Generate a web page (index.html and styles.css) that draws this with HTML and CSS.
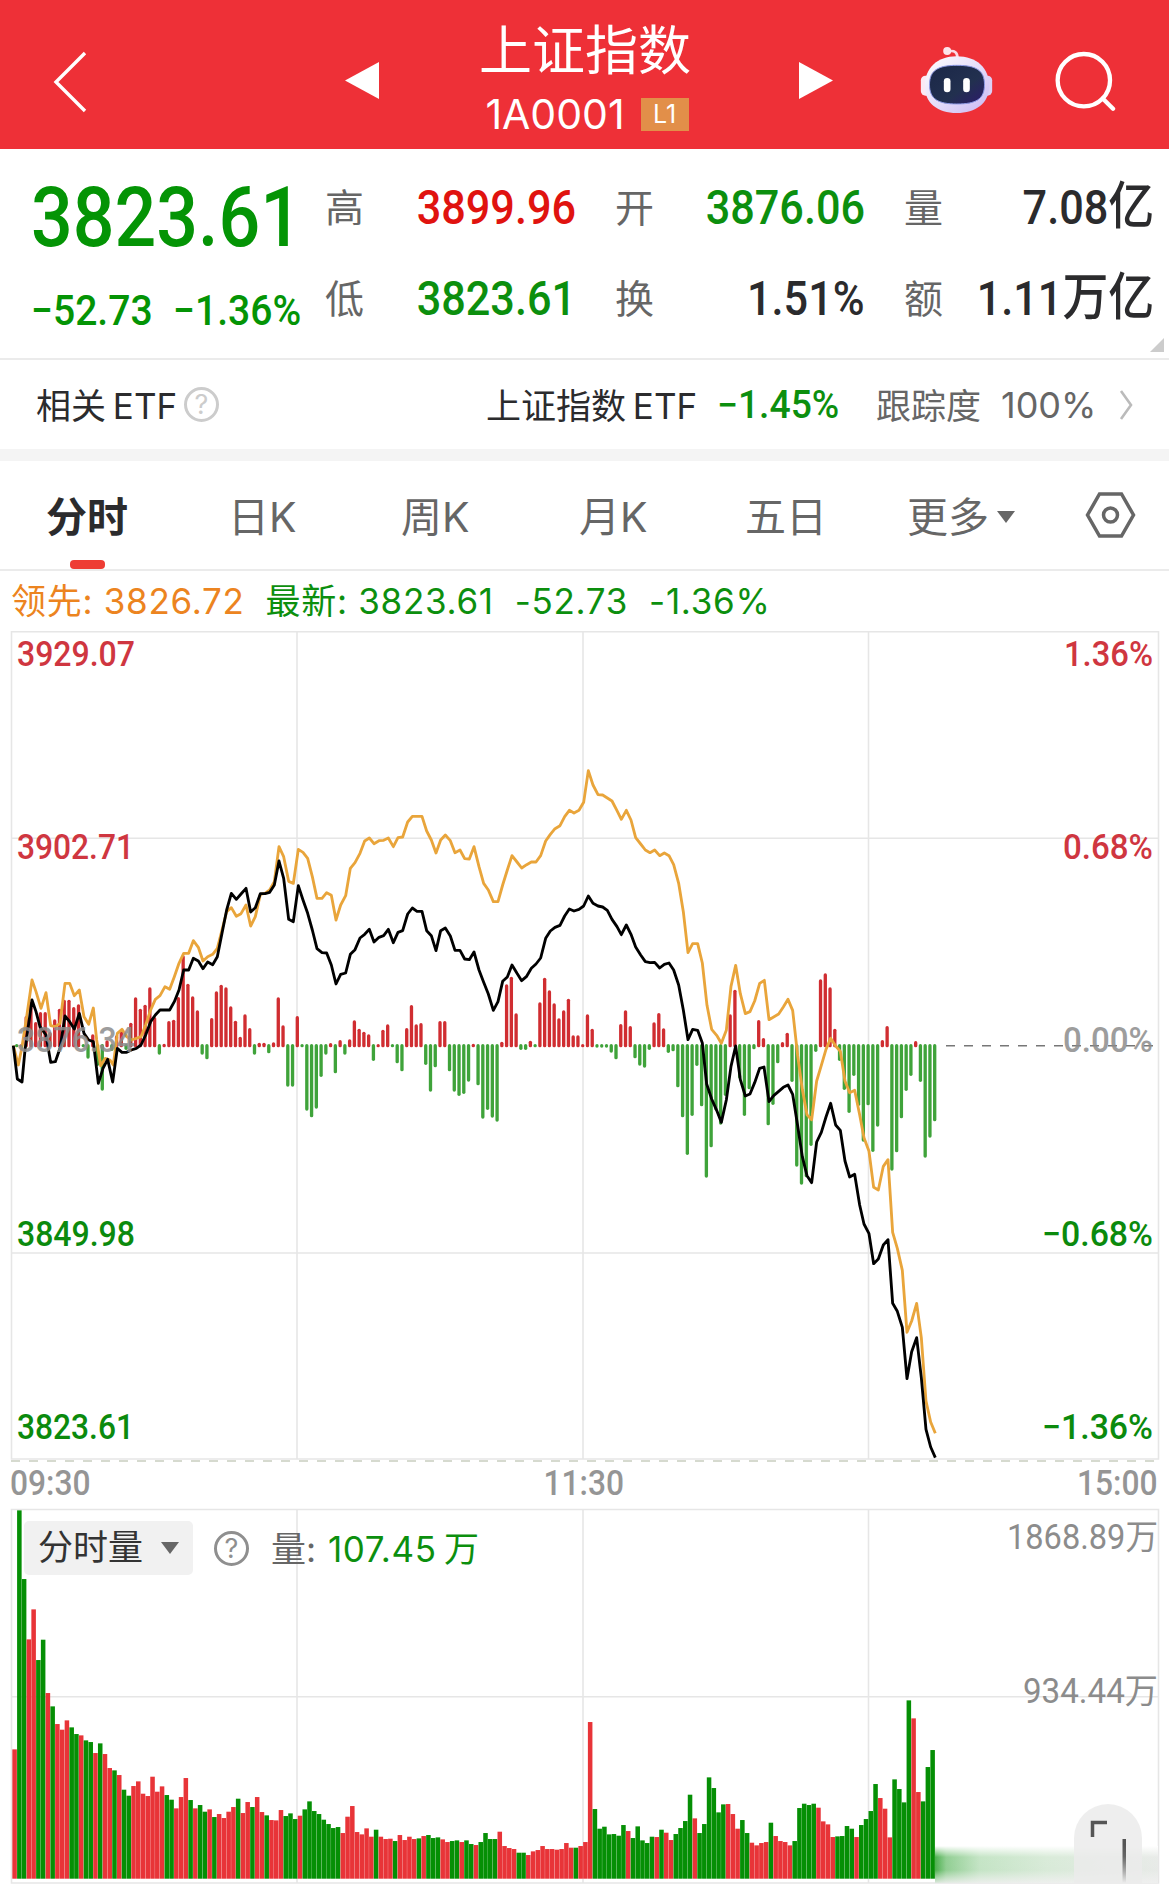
FILE: index.html
```html
<!DOCTYPE html>
<html lang="zh-CN">
<head>
  <meta charset="UTF-8" />
  <meta name="viewport" content="width=device-width, initial-scale=1.0"/>
  <title>上证指数 1A0001</title>
  <link rel="stylesheet" href="styles.css">
</head>
<body>

  <header>
    <svg class="back" viewBox="0 0 34 62"><path d="M32 2 3 31 32 60"/></svg>
    <svg class="arrow prev" viewBox="0 0 35 38"><path d="M35 0V38L0 19Z"/></svg>
    <div class="title">
      <h1>上证指数</h1>
      <div class="code"><span>1A0001</span><b>L1</b></div>
    </div>
    <svg class="arrow next" viewBox="0 0 35 38"><path d="M0 0V38L35 19Z"/></svg>
    <svg class="robot" viewBox="55 75 230 210">
      <defs>
        <linearGradient id="shell" x1="0" y1="0" x2="1" y2="1">
          <stop offset="0" stop-color="#fff"/>
          <stop offset=".5" stop-color="#e6defa"/>
          <stop offset="1" stop-color="#c9b8f2"/>
        </linearGradient>
        <linearGradient id="face" x1="0" y1="0" x2="1" y2="1">
          <stop offset="0" stop-color="#1b2748"/>
          <stop offset=".6" stop-color="#22304f"/>
          <stop offset="1" stop-color="#2d1a6c"/>
        </linearGradient>
      </defs>
      <path d="M146 94Q174 88 173 116" fill="none" stroke="#fbd9e4" stroke-width="8"/>
      <circle cx="142" cy="93" r="12" fill="#fde4ea"/>
      <rect x="63" y="167" width="34" height="60" rx="14" fill="#fbe9f4"/>
      <rect x="244" y="167" width="33" height="60" rx="14" fill="#dccff5"/>
      <path d="M170 109C232 109 268 145 268 198C268 250 228 279 170 279C114 279 75 250 75 198C75 145 112 109 170 109Z" fill="url(#shell)"/>
      <path d="M171 136C228 136 254 150 254 194C254 238 228 252 171 252C116 252 89 238 89 194C89 150 116 136 171 136Z" fill="url(#face)" stroke="#8f9be6" stroke-width="3"/>
      <rect x="132" y="174" width="20" height="43" rx="10" fill="#fff"/>
      <rect x="190" y="174" width="20" height="43" rx="10" fill="#fff"/>
    </svg>
    <svg class="search" viewBox="460 90 190 190">
      <circle cx="553" cy="181" r="79"/><path d="M610 236 641 267"/>
    </svg>
  </header>

  <section class="quote">
    <div class="price">
      <div class="last">3823.61</div>
      <div class="change"><span>−52.73</span><span>−1.36%</span></div>
    </div>
    <dl class="stats">
      <div><dt>高</dt><dd class="up">3899.96</dd></div>
      <div><dt>开</dt><dd class="down">3876.06</dd></div>
      <div><dt>量</dt><dd>7.08<i>亿</i></dd></div>
      <div><dt>低</dt><dd class="down">3823.61</dd></div>
      <div><dt>换</dt><dd>1.51%</dd></div>
      <div><dt>额</dt><dd>1.11<i>万亿</i></dd></div>
    </dl>
    <span class="corner"></span>
  </section>

  <section class="etf">
    <span class="etf-label">相关 ETF</span>
    <span class="help light">?</span>
    <span class="etf-name">上证指数 ETF</span>
    <span class="etf-change">−1.45%</span>
    <span class="etf-track">跟踪度</span>
    <span class="etf-pct">100%</span>
    <svg class="chevron" viewBox="0 0 14 30"><path d="M2 1 12 15 2 29"/></svg>
  </section>

  <nav class="tabs">
    <a class="active">分时</a>
    <a>日K</a>
    <a>周K</a>
    <a>月K</a>
    <a>五日</a>
    <a class="more">更多<i class="caret"></i></a>
    <svg class="gear" viewBox="0 0 50 46"><path d="M14 2H36L48 23 36 44H14L2 23Z"/><circle cx="25" cy="23" r="7"/></svg>
  </nav>

  <div class="legend">
    <span class="lead">领先: 3826.72</span>
    <span>最新: 3823.61</span>
    <span>-52.73</span>
    <span>-1.36%</span>
  </div>

  <svg class="chart" id="priceChart" viewBox="0 0 1169 836">
    <g class="grid">
      <path d="M11.5 3.7H1158.5V831H11.5ZM297 4V831M583 4V831M868.5 4V831M12 210.3H1158M12 625H1158"/>
    </g>
    <path class="dash-bottom" d="M11 833H1158"/>
    <path class="dash-zero" d="M946 417.8H1158"/>
    <!-- 1 px = 3 unidades de datos; eje cero en 917 -->
    <g transform="translate(0 112) scale(.33333)">
      <g id="macd"></g>
      <polyline class="line avg" points="40,917 55,975 66,920 80,830 96,720 108,755 123,805 138,758 152,857 166,860 180,850 195,730 209,730 223,767 238,750 252,830 266,853 280,804 290,900 302,977 316,955 330,960 340,975 352,880 366,868 380,890 394,900 409,895 423,890 437,855 452,810 466,778 480,767 495,740 509,748 523,710 537,670 551,640 566,640 580,602 595,622 609,663 623,650 638,643 652,625 666,570 680,515 694,503 709,529 723,521 738,495 752,558 766,530 781,463 795,460 809,450 823,425 837,320 851,350 866,424 880,430 895,328 909,337 923,355 937,410 951,475 966,475 980,458 994,466 1008,540 1022,495 1037,467 1051,385 1065,368 1080,340 1094,303 1108,294 1122,311 1137,302 1151,301 1165,294 1180,320 1194,293 1208,291 1223,246 1237,229 1251,229 1266,229 1280,273 1294,300 1308,339 1322,300 1336,285 1351,302 1365,338 1380,330 1394,356 1408,357 1422,320 1437,380 1451,430 1465,450 1480,485 1494,485 1508,435 1522,390 1536,347 1551,366 1565,384 1580,374 1594,366 1608,366 1622,347 1637,303 1651,283 1665,266 1680,257 1694,230 1708,211 1722,219 1737,211 1751,187 1765,92 1779,135 1794,164 1808,165 1822,174 1836,183 1851,212 1864,238 1879,211 1893,240 1907,293 1922,312 1936,330 1950,338 1964,330 1979,347 1993,339 2007,347 2021,374 2036,430 2050,515 2064,638 2078,611 2093,611 2107,669 2121,796 2135,868 2150,886 2164,910 2179,871 2193,739 2207,676 2221,761 2236,821 2250,815 2264,783 2279,730 2293,721 2307,839 2321,831 2336,822 2350,801 2364,778 2378,811 2393,947 2407,1048 2421,1124 2435,1139 2450,1023 2464,976 2478,928 2492,895 2507,918 2521,934 2535,1023 2549,1058 2564,1051 2579,1124 2592,1193 2607,1234 2621,1342 2635,1350 2650,1279 2664,1259 2678,1477 2692,1525 2707,1591 2721,1777 2735,1743 2750,1690 2764,1793 2778,1983 2792,2046 2806,2080"/>
      <polyline class="line index" points="40,917 52,1017 66,1026 75,930 96,780 108,815 120,860 138,885 152,967 166,965 180,925 195,828 209,845 223,867 238,820 252,880 266,900 280,905 295,1030 309,985 323,958 338,1026 352,925 366,937 380,937 394,930 409,925 423,915 437,885 452,845 466,825 480,810 495,810 509,810 523,785 537,750 551,690 566,690 580,655 595,663 609,686 623,666 638,674 652,650 666,580 680,510 694,460 709,478 723,462 738,445 752,516 766,503 781,461 795,461 809,457 823,435 837,363 851,415 866,538 880,545 895,437 909,480 923,520 937,570 951,626 966,638 980,639 994,675 1008,732 1022,703 1037,699 1051,643 1065,629 1080,594 1094,583 1108,568 1122,606 1137,592 1151,587 1165,568 1180,608 1194,577 1208,572 1223,522 1237,504 1251,514 1266,514 1280,572 1294,587 1308,632 1322,572 1336,564 1351,588 1365,631 1380,631 1394,657 1408,659 1422,636 1437,690 1451,727 1465,762 1480,811 1494,785 1508,724 1522,711 1536,675 1551,700 1565,722 1580,709 1594,685 1608,672 1622,654 1637,595 1651,573 1665,562 1680,556 1694,528 1708,507 1722,513 1737,508 1751,498 1765,468 1779,490 1794,498 1808,501 1822,511 1836,538 1851,560 1864,584 1879,555 1893,583 1907,621 1922,645 1936,665 1950,668 1964,667 1979,684 1993,673 2007,669 2021,690 2036,735 2050,810 2064,899 2078,868 2093,871 2107,909 2120,1032 2135,1077 2150,1111 2164,1147 2179,1080 2193,979 2207,918 2221,1019 2236,1068 2250,1062 2264,1028 2279,985 2292,981 2307,1085 2321,1067 2336,1054 2350,1042 2364,1035 2378,1063 2393,1157 2407,1250 2421,1307 2435,1328 2450,1206 2464,1177 2478,1131 2492,1090 2507,1155 2521,1171 2535,1263 2549,1311 2564,1303 2579,1395 2592,1452 2607,1481 2621,1571 2635,1557 2650,1515 2664,1499 2678,1690 2692,1714 2707,1762 2721,1916 2735,1835 2750,1793 2764,1913 2778,2068 2792,2121 2806,2153"/>
    </g>
    <g class="axis">
      <text class="r" x="17" y="38" textLength="118" lengthAdjust="spacingAndGlyphs">3929.07</text>
      <text class="r" x="17" y="231" textLength="117" lengthAdjust="spacingAndGlyphs">3902.71</text>
      <text class="n" x="17" y="424" textLength="118" lengthAdjust="spacingAndGlyphs">3876.34</text>
      <text class="g" x="17" y="618" textLength="118" lengthAdjust="spacingAndGlyphs">3849.98</text>
      <text class="g" x="17" y="811" textLength="117" lengthAdjust="spacingAndGlyphs">3823.61</text>
      <text class="r" x="1064" y="38" textLength="89" lengthAdjust="spacingAndGlyphs">1.36%</text>
      <text class="r" x="1063" y="231" textLength="90" lengthAdjust="spacingAndGlyphs">0.68%</text>
      <text class="n" x="1063" y="424" textLength="90" lengthAdjust="spacingAndGlyphs">0.00%</text>
      <text class="g" x="1042" y="618" textLength="111" lengthAdjust="spacingAndGlyphs">−0.68%</text>
      <text class="g" x="1042" y="811" textLength="111" lengthAdjust="spacingAndGlyphs">−1.36%</text>
    </g>
  </svg>

  <div class="times"><span>09:30</span><span>11:30</span><span>15:00</span></div>

  <section class="volume">
    <svg class="chart" viewBox="0 0 1169 382">
      <defs>
        <linearGradient id="smear" x1="0" x2="1">
          <stop offset="0" stop-color="#3aa83c"/>
          <stop offset=".05" stop-color="#86ca88"/>
          <stop offset=".2" stop-color="#bfe2c0"/>
          <stop offset=".5" stop-color="#d5e9d5"/>
          <stop offset="1" stop-color="#e6e9e6"/>
        </linearGradient>
        <linearGradient id="smearFade" x1="0" y1="0" x2="0" y2="1">
          <stop offset="0" stop-color="#fff"/>
          <stop offset=".3" stop-color="#fff" stop-opacity=".1"/>
          <stop offset=".65" stop-color="#f2f2f2" stop-opacity=".1"/>
          <stop offset="1" stop-color="#f0f0f0" stop-opacity=".9"/>
        </linearGradient>
        <linearGradient id="stem" gradientUnits="userSpaceOnUse" x1="0" y1="340" x2="0" y2="378">
          <stop offset="0" stop-color="#555"/>
          <stop offset=".3" stop-color="#666"/>
          <stop offset="1" stop-color="#555" stop-opacity="0"/>
        </linearGradient>
      </defs>
      <g class="grid">
        <path d="M11.5 4.5H1158.5V378H11.5ZM297 5V378M583 5V378M868.5 5V378M12 191.7H1158"/>
      </g>
      <g id="vol" transform="translate(0 373.7) scale(.33333 -.33333)"></g>
      <rect x="935" y="341" width="223" height="37" fill="url(#smear)"/>
      <rect x="935" y="341" width="223" height="37" fill="url(#smearFade)"/>
      <path d="M1074 378V333A34 34 0 0 1 1142 333V378Z" fill="#ebebeb" opacity=".85"/>
      <path d="M1092.5 332V317.5H1107" fill="none" stroke="#555" stroke-width="3.5"/>
      <rect x="1122.5" y="334" width="3.5" height="44" fill="url(#stem)"/>
      <g class="axis vol-axis">
        <text x="1007" y="44" textLength="151" lengthAdjust="spacingAndGlyphs">1868.89万</text>
        <text x="1023" y="198" textLength="135" lengthAdjust="spacingAndGlyphs">934.44万</text>
      </g>
    </svg>
    <div class="vol-bar">
      <span class="picker">分时量<i class="caret"></i></span>
      <span class="help">?</span>
      <span class="vol-now">量: <em>107.45 万</em></span>
    </div>
  </section>

  <script src="chart.js"></script>
</body>
</html>
```

FILE: styles.css
```css
:root {
  --rojo: #ee3037;
  --verde: #0c8f0e;
  --texto: #2b2b2d;
  --gris: #666;
  --linea: #e6e6e6;
  --cjk: "Noto Sans CJK SC", sans-serif;
}
* { box-sizing: border-box; margin: 0; padding: 0; }
body {
  width: 1169px;
  height: 1895px;
  overflow: hidden;
  background: #fff;
  color: var(--texto);
  font-family: Inter, var(--cjk);
}
svg { display: block; flex: none; }
i, em { font-style: normal; }

header {
  display: flex;
  align-items: center;
  height: 149px;
  background: var(--rojo);
  color: #fff;
}
.back {
  width: 34px;
  height: 62px;
  margin: 15px 0 0 53px;
  fill: none;
  stroke: #fff;
  stroke-width: 3.4;
}
.arrow { width: 34px; height: 37px; fill: #fff; margin-top: 12px; }
.prev { margin-left: 258px; }
.title { width: 420px; text-align: center; padding-right: 8px; }
.title h1 {
  font: 400 53px/62px var(--cjk);
  margin-top: 3px;
}
.code {
  display: flex;
  justify-content: center;
  align-items: center;
  gap: 16px;
  height: 44px;
  margin: 14px -4px 0 0;
  font-size: 41px;
}
.code b {
  width: 48px;
  height: 33px;
  background: #e28f49;
  font: 400 25px/33px Inter, sans-serif;
}
.robot { width: 77px; height: 70px; margin: 11px 0 0 85px; }
.search {
  width: 63px;
  height: 63px;
  margin: 14px 0 0 58px;
  fill: none;
  stroke: #fff;
  stroke-width: 13;
  stroke-linecap: round;
}

/* Cotización */
.quote {
  position: relative;
  display: flex;
  height: 211px;
  border-bottom: 2px solid #ebebeb;
}
.price {
  width: 325px;
  padding-left: 31px;
  color: #049405;
  font-family: Roboto, sans-serif;
  font-weight: 500;
  white-space: nowrap;
}
.last {
  font-size: 84px;
  line-height: 98px;
  margin-top: 20px;
  transform: scaleX(.875);
  transform-origin: left;
}
.change {
  display: flex;
  gap: 22px;
  font-size: 42px;
  line-height: 50px;
  margin-top: 19px;
  transform: scaleX(.93);
  transform-origin: left;
}
.stats {
  display: grid;
  grid-template-columns: 251px 250px 250px;
  column-gap: 39px;
  grid-auto-rows: 91px;
  padding-top: 13px;
}
.stats div { display: flex; justify-content: space-between; align-items: center; }
.stats dt { font: 400 39px/60px var(--cjk); color: var(--gris); margin-top: -5px; }
.stats dd {
  font: 500 48px/60px Roboto, var(--cjk);
  white-space: nowrap;
  transform: scaleX(.9);
  transform-origin: right;
}
.stats dd i { font-size: 51px; font-weight: 500; }
.up { color: #e0130f; }
.down { color: var(--verde); }
.corner {
  position: absolute;
  right: 5px;
  bottom: 6px;
  border: 7px solid #ccc;
  border-top-color: transparent;
  border-left-color: transparent;
}

.etf {
  display: flex;
  align-items: center;
  height: 101px;
  border-bottom: 12px solid #f4f4f4;
  font-size: 35px;
  white-space: nowrap;
  padding-left: 36px;
}
.etf-label, .etf-name { font-size: 35px; word-spacing: -3px; padding-bottom: 2px; }
.etf-label { width: 148px; }
.help {
  width: 35px;
  height: 35px;
  border: 3px solid #8f8f8f;
  border-radius: 50%;
  color: #8f8f8f;
  font-size: 27px;
  line-height: 30px;
  text-align: center;
}
.help.light { border-color: #ccc; color: #ccc; }
.etf-name { margin-left: 267px; width: 231px; }
.etf-change {
  width: 159px;
  color: var(--verde);
  font: 500 38px Roboto, sans-serif;
  transform: scaleX(.98);
  transform-origin: left;
}
.etf-track, .etf-pct { color: var(--gris); padding-bottom: 2px; }
.etf-track { width: 125px; }
.etf-pct { width: 118px; font-size: 36px; padding: 0; }
.chevron { width: 14px; height: 30px; fill: none; stroke: #bbb; stroke-width: 2.6; }

.tabs {
  position: relative;
  display: flex;
  align-items: center;
  height: 110px;
  border-bottom: 2px solid #ebebeb;
  padding-left: 46px;
  font-size: 41px;
  color: var(--gris);
}
.tabs a { width: 174px; white-space: nowrap; padding-bottom: 2px; }
.tabs a:nth-child(1) { width: 182px; }
.tabs a:nth-child(2) { width: 173px; }
.tabs a:nth-child(3) { width: 178px; }
.tabs a:nth-child(4) { width: 166px; }
.tabs a:nth-child(5) { width: 162px; }
.tabs .active { color: var(--texto); font-weight: 700; }
.tabs .active::after {
  content: "";
  position: absolute;
  left: 70px;
  bottom: 0;
  width: 35px;
  height: 9px;
  border-radius: 4px;
  background: #ee3c34;
}
.caret {
  display: inline-block;
  border: 9px solid transparent;
  border-top: 12px solid var(--gris);
  border-bottom: 0;
  vertical-align: 9px;
  margin-left: 8px;
}
.gear { width: 51px; height: 46px; margin-left: 4px; fill: none; stroke: var(--gris); stroke-width: 3.5; }

.legend {
  display: flex;
  gap: 21px;
  height: 57px;
  padding: 2px 0 0 11px;
  font-size: 35px;
  line-height: 56px;
  letter-spacing: .7px;
  color: var(--verde);
  white-space: nowrap;
}
.legend .lead { color: #ec8420; }

/* Gráficos */
.chart { width: 1169px; }
.grid path { fill: none; stroke: var(--linea); stroke-width: 1.6; }
.dash-zero { stroke: #777; stroke-width: 1.4; stroke-dasharray: 9 9; }
.dash-bottom { stroke: #c9cec0; stroke-width: 1.6; stroke-dasharray: 9 9; }
.line { fill: none; stroke-width: 8.5; stroke-linejoin: round; }
.avg { stroke: #e9a53b; }
.index { stroke: #000; }
#macd path { stroke-width: 10; stroke-linecap: round; }
#macd .u { stroke: #d02d31; }
#macd .d { stroke: #3fa33a; }
#vol .u { fill: #e83438; }
#vol .d { fill: #058f05; }
.axis text { font: 500 34.5px Roboto, var(--cjk); }
.axis .r { fill: #cf3640; }
.axis .g { fill: #0b8a0d; }
.axis .n { fill: #8c8c8c; opacity: .85; }
.axis.vol-axis text { fill: #8c8c8c; font-weight: 400; }

.times {
  display: flex;
  justify-content: space-between;
  height: 41px;
  padding: 0 11px;
  font: 500 34.5px/38px Roboto, sans-serif;
  color: #959595;
}
.times span { transform: translateX(-1px) scaleX(.92); }
.times span:first-child { transform-origin: left; }
.times span:last-child { transform: scaleX(.92); transform-origin: right; }

.volume { position: relative; }
.vol-bar {
  position: absolute;
  left: 24px;
  top: 16px;
  display: flex;
  align-items: center;
  height: 54px;
  font-size: 35px;
  color: var(--gris);
  white-space: nowrap;
}
.picker {
  width: 169px;
  height: 54px;
  line-height: 53px;
  padding-left: 14px;
  border-radius: 5px;
  background: #f1f1f1;
  color: #333;
}
.picker .caret { margin-left: 18px; vertical-align: 6px; }
.vol-bar .help { margin: 0 22px 0 21px; }
.vol-now { font-size: 35px; padding-bottom: 3px; }
.vol-now em { color: var(--verde); letter-spacing: .6px; word-spacing: -3px; margin-left: 2px; }
```

FILE: chart.js
```js
const NS = "http://www.w3.org/2000/svg";
const STEP = 14.27;
const ZERO = 917;

const macd = [
  -3,3,88,130,70,100,100,40,78,110,137,137,115,123,-3,-38,33,-60,-134,15,
  -15,30,45,-12,68,144,110,122,174,85,-26,5,73,77,145,270,185,147,105,-26,
  -40,82,162,182,174,117,74,26,93,52,-26,8,8,-22,9,144,60,-122,-122,88,
  -3,-194,-214,-188,-93,-26,7,-82,16,-26,18,75,50,41,33,-45,3,47,63,-3,
  -52,-76,52,121,63,67,-57,-137,-64,73,73,-76,-137,-150,-144,-107,5,-118,-218,-192,
  -215,-227,11,183,206,96,-12,-12,14,-4,129,203,165,126,81,105,140,30,30,4,
  93,50,-5,-5,-5,-20,-40,64,105,58,-37,-59,-65,-12,69,97,51,-21,-16,-124,
  -214,-327,-210,-60,-181,-395,-304,-193,-236,-150,93,167,-98,-210,-130,-10,76,22,-238,-177,
  -52,10,38,-108,-362,-416,-394,-300,-18,198,216,174,50,-45,-132,-201,-90,-180,-287,-178,
  -318,-242,16,58,-374,-319,-217,-135,-90,13,-108,-335,-275,-226
];

// positivo = rojo, negativo = verde
const volume = [
  388,-1105,-899,718,808,-656,-717,557,-517,464,447,475,-454,-434,430,-415,-410,377,-406,374,
  332,-325,311,-267,-249,278,292,255,248,306,261,277,-251,-237,211,245,302,-236,211,-221,
  -201,208,-185,194,182,201,215,-240,197,230,-215,245,200,-190,176,175,206,-188,-196,-179,
  189,-208,-232,-203,-194,-177,-164,-152,-155,137,186,218,140,133,151,126,-147,126,119,120,
  -113,131,116,126,119,-121,128,-131,-122,-124,118,110,-113,-115,110,-115,-104,101,-110,-137,
  -119,-119,141,98,92,89,-78,-78,71,82,86,98,89,89,87,89,107,93,-93,98,
  110,470,-209,-150,-156,-133,-134,-129,-161,143,-122,-157,-115,-107,-126,125,-147,138,116,-134,
  -152,-173,-252,181,-137,-164,-304,-272,-199,-223,224,194,150,-176,-137,108,100,107,110,-168,
  128,113,110,100,-113,-212,-225,-221,-225,213,172,163,125,-127,-128,-158,-150,125,-161,-179,
  -203,-284,242,210,124,-298,-269,-229,-535,481,260,-232,-335,-386
];

function add(parent, tag, attrs) {
  const el = document.createElementNS(NS, tag);
  for (const k in attrs) el.setAttribute(k, attrs[k]);
  parent.appendChild(el);
}

const macdGroup = document.getElementById("macd");
macd.forEach((v, i) => {
  const x = 50 + STEP * i;
  const end = v > 0 ? Math.min(ZERO - v + 4, ZERO) : Math.max(ZERO - v - 4, ZERO);
  add(macdGroup, "path", { d: `M${x} ${ZERO}V${end + 0.1}`, class: v > 0 ? "u" : "d" });
});

const volGroup = document.getElementById("vol");
volume.forEach((v, i) => {
  add(volGroup, "rect", {
    x: 37 + STEP * i, y: 0, width: 13.6, height: Math.abs(v), class: v > 0 ? "u" : "d"
  });
});
```
